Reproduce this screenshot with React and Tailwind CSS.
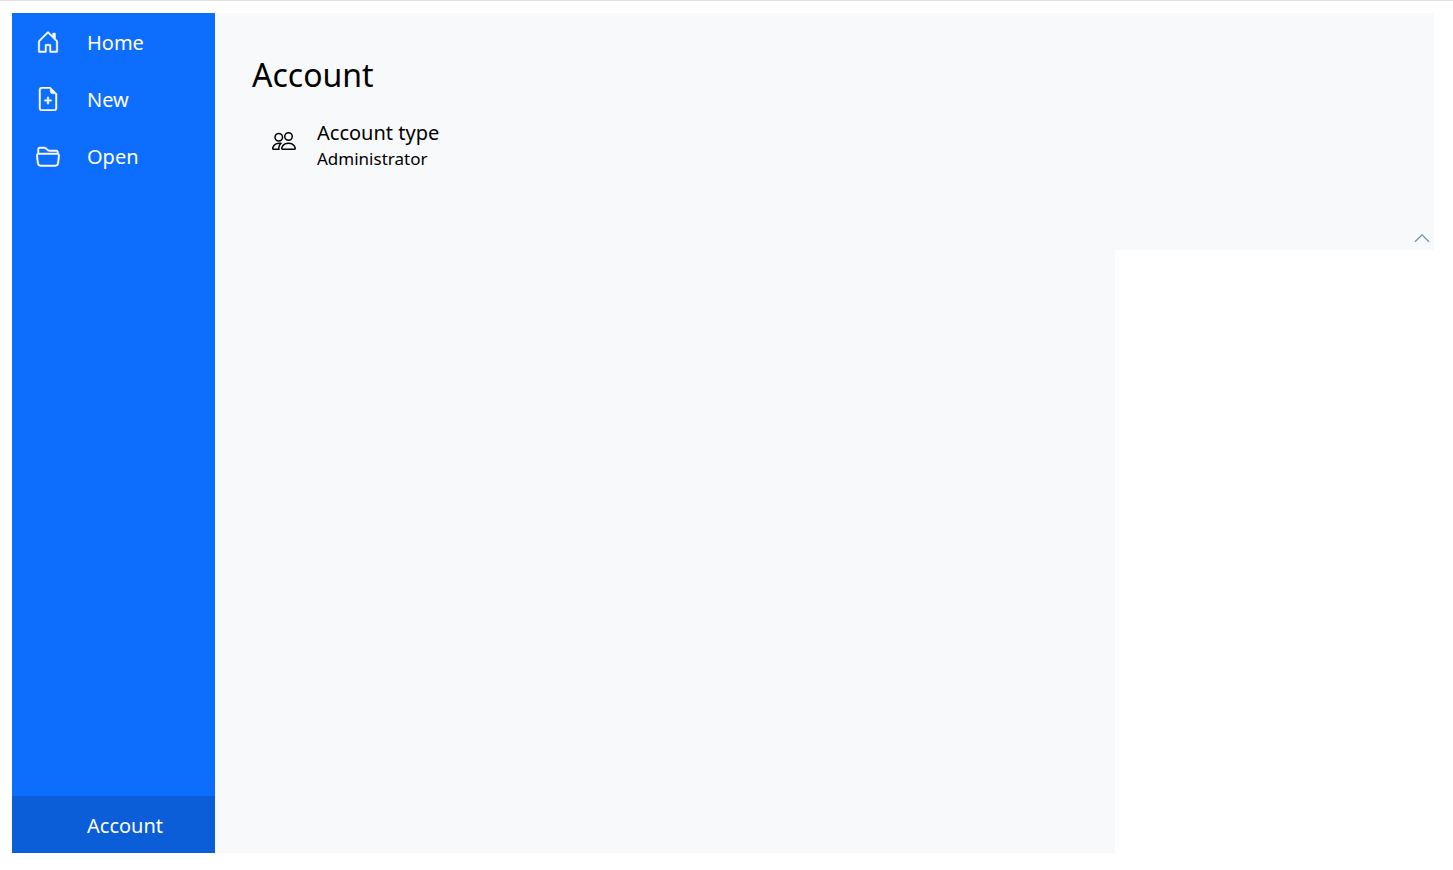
import { BsHouseDoor, BsFileEarmarkPlus, BsFolder2Open, BsPeople } from "react-icons/bs";

const items = [
  { label: "Home", Icon: BsHouseDoor },
  { label: "New", Icon: BsFileEarmarkPlus },
  { label: "Open", Icon: BsFolder2Open },
];

export default function App() {
  return (
    <div className="min-h-screen border-t border-[#e1e1e1] bg-white p-3 pr-[19px] font-['Noto_Sans',sans-serif] text-black">
      <div className="relative">
        <div className="flex h-[237px] items-end justify-end bg-[#f8f9fa]">
          <button aria-label="Collapse" className="p-1 text-[#6d8fb0]">
            <svg viewBox="0 0 16 16" className="size-4" fill="none" stroke="currentColor" strokeWidth="1.3">
              <path d="M1 11.7 8 4.8l7 6.9" />
            </svg>
          </button>
        </div>
        <div className="absolute top-0 left-0 flex min-h-[840px] w-[1103px] max-w-full bg-[#f8f9fa]">
          <nav className="flex w-[203px] flex-col bg-[#0d6efd] text-xl text-white">
            {items.map(({ label, Icon }) => (
              <button key={label} className="flex h-[57px] items-center gap-[27px] pl-6">
                <Icon size={24} strokeWidth="0.3" />
                <span className="pt-0.5">{label}</span>
              </button>
            ))}
            <button className="mt-auto flex h-[57px] items-center bg-[#0b5ed7] pl-[75px]">
              <span className="pt-0.5">Account</span>
            </button>
          </nav>
          <main className="flex-1 px-[37px] pt-[38px]">
            <h1 className="text-[32px] leading-[48px]">Account</h1>
            <div className="mt-[18px] flex gap-[21px] pl-5">
              <BsPeople size={24} className="mt-3" />
              <div>
                <h2 className="text-xl leading-8">Account type</h2>
                <p className="text-[17px] leading-5">Administrator</p>
              </div>
            </div>
          </main>
        </div>
      </div>
    </div>
  );
}
